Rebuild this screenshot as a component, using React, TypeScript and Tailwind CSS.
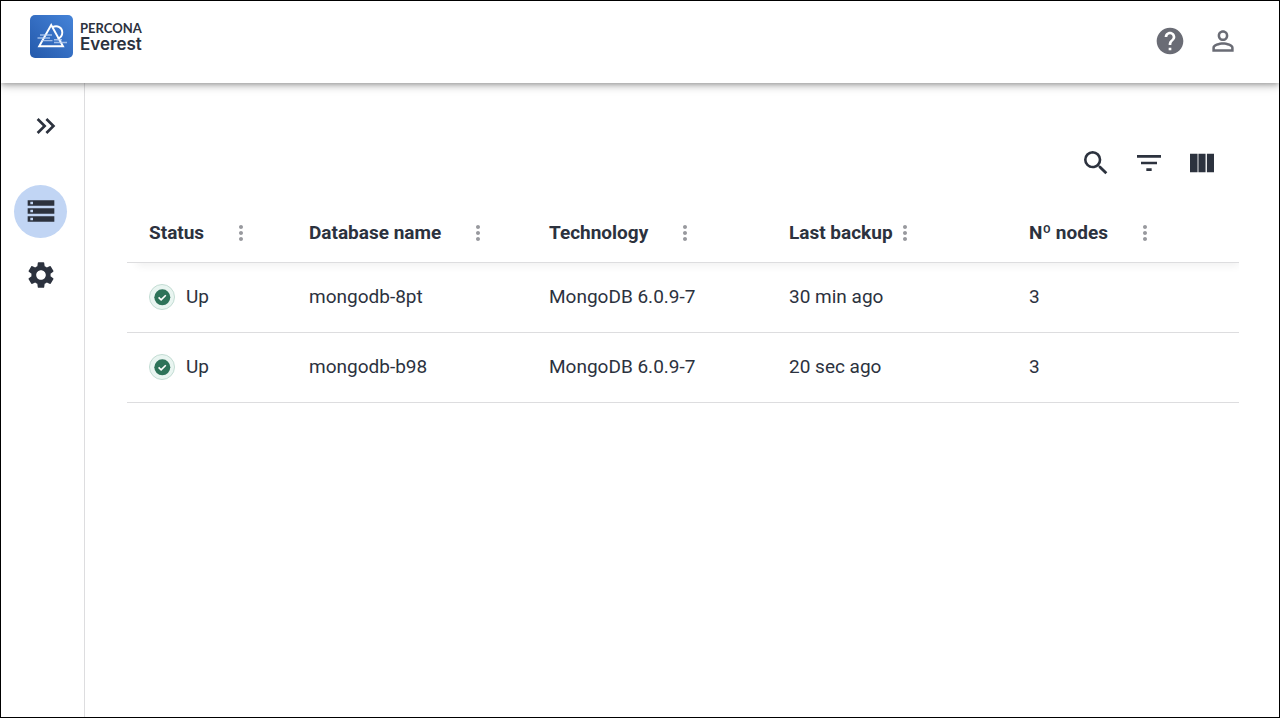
import type { ReactNode } from 'react';
import {
  MdFilterList,
  MdHelp,
  MdKeyboardDoubleArrowRight,
  MdMoreVert,
  MdPersonOutline,
  MdSearch,
  MdSettings,
  MdStorage,
} from 'react-icons/md';

type Database = {
  status: string;
  name: string;
  technology: string;
  lastBackup: string;
  nodes: number;
};

const databases: Database[] = [
  { status: 'Up', name: 'mongodb-8pt', technology: 'MongoDB 6.0.9-7', lastBackup: '30 min ago', nodes: 3 },
  { status: 'Up', name: 'mongodb-b98', technology: 'MongoDB 6.0.9-7', lastBackup: '20 sec ago', nodes: 3 },
];

const columns = [
  { label: 'Status', width: 'w-40', gap: 'gap-[25px]' },
  { label: 'Database name', width: 'w-60', gap: 'gap-[25px]' },
  { label: 'Technology', width: 'w-60', gap: 'gap-[25px]' },
  { label: 'Last backup', width: 'w-60', gap: 'gap-0' },
  { label: 'Nº nodes', width: '', gap: 'gap-[25px]' },
];

function Logo() {
  return (
    <a href="#" className="flex items-center gap-[7px] text-[#2c323e]">
      <svg className="size-[43px]" viewBox="0 0 43 43" fill="none" aria-hidden="true">
        <defs>
          <linearGradient id="tile" x1="0" y1="43" x2="43" y2="0" gradientUnits="userSpaceOnUse">
            <stop stopColor="#2459ab" />
            <stop offset="1" stopColor="#4583d8" />
          </linearGradient>
        </defs>
        <rect width="43" height="43" rx="5" fill="url(#tile)" />
        <path d="M9.200 31.200 21.200 10l11.800 21.200Z" stroke="#fff" strokeWidth="1.900" />
        <path d="M22.500 12.200c5-2.400 9.800.6 9.800 5.200 0 3-1.800 5.200-4.600 6.100" stroke="#fff" strokeWidth="1.900" />
        <path d="M10 20h12M7.500 23h12.500M11 25.600h11.500M24 24.800h8M24 27.500h13" stroke="#b9d0f2" strokeOpacity=".8" strokeWidth="1.400" />
      </svg>
      <span className="flex flex-col">
        <span className="font-[Lato,sans-serif] text-[13px] leading-4 font-bold">PERCONA</span>
        <span className="font-[Inter,sans-serif] text-[17px] leading-4 font-semibold">Everest</span>
      </span>
    </a>
  );
}

function ViewColumnIcon() {
  return (
    <svg className="size-8" viewBox="0 0 24 24" fill="currentColor" aria-hidden="true">
      <path d="M14.67 5v14H9.33V5h5.34zm1 14H21V5h-5.33v14zm-7-14H3v14h5.67V5z" />
    </svg>
  );
}

function StatusUpIcon() {
  return (
    <svg className="size-[26px]" viewBox="0 0 26 26" fill="none" aria-hidden="true">
      <circle cx="13" cy="13" r="12.500" fill="#e9f5f1" stroke="#c3dcd3" />
      <circle cx="13.300" cy="13.300" r="8" fill="#2d7359" />
      <path d="m9.600 13.400 2.500 2.500 4.700-4.700" stroke="#fff" strokeWidth="1.600" />
    </svg>
  );
}

function IconButton({ label, children }: { label: string; children: ReactNode }) {
  return (
    <button type="button" aria-label={label} className="cursor-pointer">
      {children}
    </button>
  );
}

export default function App() {
  return (
    <div className="flex min-h-screen flex-col border border-black bg-white font-[Roboto,sans-serif] text-[#2c323e]">
      <div className="flex grow flex-col overflow-hidden">
        <header className="z-10 flex h-[82px] items-center justify-between bg-white pr-10 pb-3 pl-[29px] shadow-[0_2px_4px_-1px_rgba(0,0,0,0.2),0_4px_6px_0_rgba(0,0,0,0.14),0_1px_12px_0_rgba(0,0,0,0.14)]">
          <Logo />
          <div className="flex items-center gap-[21px] pt-2.5 text-[#6a6c75]">
            <IconButton label="Help">
              <MdHelp className="size-8" />
            </IconButton>
            <IconButton label="Account">
              <MdPersonOutline className="size-8" />
            </IconButton>
          </div>
        </header>

        <div className="flex grow">
          <nav className="flex w-[84px] shrink-0 flex-col border-r border-[#dddddf] pt-[27px] pl-[13px]">
            <button type="button" aria-label="Expand menu" className="ml-4 w-8 cursor-pointer">
              <MdKeyboardDoubleArrowRight className="size-8" />
            </button>
            <a href="#databases" aria-label="Databases" className="mt-[43px] flex size-[53px] items-center justify-center rounded-full bg-[#c1d5f4] pb-px">
              <MdStorage className="size-8" />
            </a>
            <a href="#settings" aria-label="Settings" className="mt-[11px] flex size-[53px] items-center justify-center rounded-full pb-px">
              <MdSettings className="size-8" />
            </a>
          </nav>

          <main className="grow pt-16 pr-10 pl-[42px]">
            <div className="flex justify-end gap-[21px] pr-[21px]">
              <IconButton label="Search">
                <MdSearch className="size-8" />
              </IconButton>
              <IconButton label="Filters">
                <MdFilterList className="size-8" />
              </IconButton>
              <IconButton label="Show or hide columns">
                <ViewColumnIcon />
              </IconButton>
            </div>

            <div className="mt-6 overflow-hidden">
              <table className="w-full table-fixed text-left text-[19px] leading-6">
                <thead>
                  <tr className="h-[59px] border-b border-[#dddddf] shadow-[5px_9px_8px_-5px_rgba(0,0,0,0.06)]">
                    {columns.map((column) => (
                      <th key={column.label} scope="col" className={`${column.width} pt-0.5 pl-[22px] font-bold`}>
                        <div className={`flex items-center ${column.gap}`}>
                          <span className="whitespace-nowrap">{column.label}</span>
                          <button type="button" aria-label={`${column.label} column actions`} className="cursor-pointer text-[#98999e]">
                            <MdMoreVert className="size-6" />
                          </button>
                        </div>
                      </th>
                    ))}
                  </tr>
                </thead>
                <tbody>
                  {databases.map((database) => (
                    <tr key={database.name} className="h-[70px] border-b border-[#dddddf]">
                      <td className="pl-[22px]">
                        <div className="flex items-center gap-[11px]">
                          <StatusUpIcon />
                          {database.status}
                        </div>
                      </td>
                      <td className="pl-[22px]">{database.name}</td>
                      <td className="pl-[22px]">{database.technology}</td>
                      <td className="pl-[22px]">{database.lastBackup}</td>
                      <td className="pl-[22px]">{database.nodes}</td>
                    </tr>
                  ))}
                </tbody>
              </table>
            </div>
          </main>
        </div>
      </div>
    </div>
  );
}
